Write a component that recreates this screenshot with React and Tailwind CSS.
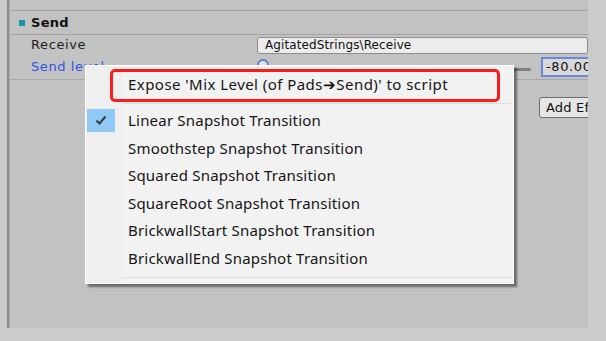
import React from "react";

const menuItems = [
  "Smoothstep Snapshot Transition",
  "Squared Snapshot Transition",
  "SquareRoot Snapshot Transition",
  "BrickwallStart Snapshot Transition",
  "BrickwallEnd Snapshot Transition",
];

export default function App() {
  const ui = { fontFamily: '"DejaVu Sans", Verdana, sans-serif' };
  const menuFont = { fontFamily: '"Noto Sans", "Open Sans", sans-serif' };
  return (
    <div className="relative w-[606px] h-[341px] bg-[#cbcbcb] overflow-hidden flex" style={ui}>
      <div className="w-[7px] shrink-0" />
      <div className="w-[3px] h-[328px] shrink-0 border-l-2 border-[#8f8f8f] bg-[#a9a9a9]" />
      <div className="w-[578px] h-[328px] shrink-0 bg-[#c2c2c2] flex flex-col overflow-hidden">
        <div className="h-[10px] shrink-0" />
        <div className="h-[25px] shrink-0 border-t border-b border-[#a4a4a4] flex items-center pl-[9px] gap-[6px]">
          <div className="w-[6px] h-[6px] bg-[#1596a6]" />
          <span className="text-[13px] font-bold text-[#111] tracking-[0.3px]">Send</span>
        </div>
        <div className="h-[20px] shrink-0 flex items-center">
          <div className="w-[247px] shrink-0 pl-[21px] text-[13px] text-[#1e1e1e] tracking-[0.6px]">Receive</div>
          <div className="flex-1 h-[17px] rounded-[3px] border border-[#8e8e8e] bg-[#ececec] flex items-center pl-[7px] text-[12px] text-[#111] tracking-[0.1px]">
            AgitatedStrings\Receive
          </div>
        </div>
        <div className="h-[25px] shrink-0 border-b border-[#a8a8a8] flex items-center">
          <div className="w-[247px] shrink-0 pl-[21px] text-[13px] text-[#2f55e6] tracking-[0.6px]">Send level</div>
          <div className="w-[274px] shrink-0 relative h-[20px] flex items-center">
            <div className="absolute left-[10px] right-0 top-[11px] h-[3px] rounded-full bg-[#7f7f7f]" />
            <div className="absolute left-0 top-[2px] w-[12px] h-[12px] rounded-full border-2 border-[#5a7fd8] bg-[#e3e3e3]" />
          </div>
          <div className="ml-[10px] w-[50px] h-[20px] shrink-0 border-2 border-[#6a87e0] bg-[#d8d8d8] flex items-center pl-[3px] text-[13px] text-[#111] tracking-[0.6px] whitespace-nowrap overflow-hidden">
            -80.00
          </div>
        </div>
        <div className="pt-[17px] pl-[529px]">
          <div className="w-[90px] h-[21px] rounded-[3px] border border-[#6e6e6e] bg-[#e6e6e6] flex items-center pl-[6px] text-[13px] text-[#111] tracking-[0.2px] whitespace-nowrap">
            Add Effect
          </div>
        </div>
      </div>

      {/* Context menu */}
      <div
        className="absolute left-[85px] top-[65px] w-[429px] h-[219px] bg-[#f2f2f2] border border-[#ffffff] shadow-[3px_3px_2px_rgba(0,0,0,0.45)] flex flex-col"
        style={menuFont}
      >
        <div className="absolute left-0 top-0 bottom-0 w-[37px] bg-[#efefef]" />
        <div className="relative h-[37px] shrink-0 flex items-center pl-[42px] text-[15px] tracking-[0.45px] text-[#151515]">
          Expose 'Mix Level (of Pads➔Send)' to script
        </div>
        <div className="relative ml-[38px] mr-[2px] h-[1px] bg-[#dcdcdc]" />
        <div className="relative h-[28px] mt-[2px] shrink-0 flex items-center">
          <div className="ml-[1px] w-[28px] h-[23px] bg-[#90c8f6] flex items-center justify-center">
            <svg width="14" height="12" viewBox="0 0 14 12">
              <path d="M2.5 6.5 L5.5 9.5 L11.5 2.5" fill="none" stroke="#3c3c3c" strokeWidth="2" />
            </svg>
          </div>
          <span className="ml-[13px] text-[15px] tracking-[0.2px] text-[#151515]">Linear Snapshot Transition</span>
        </div>
        {menuItems.map((t) => (
          <div key={t} className="relative h-[27.6px] shrink-0 flex items-center pl-[42px] text-[15px] tracking-[0.2px] text-[#151515]">
            {t}
          </div>
        ))}
        <div className="relative ml-[36px] mr-[2px] mt-[5px] h-[2px] border-t border-[#dedede] border-b-white" />

        {/* highlight box */}
        <div className="absolute left-[24px] top-[3px] w-[390px] h-[33px] rounded-[5px] border-[3px] border-[#ff1a1a]" />
      </div>
    </div>
  );
}
